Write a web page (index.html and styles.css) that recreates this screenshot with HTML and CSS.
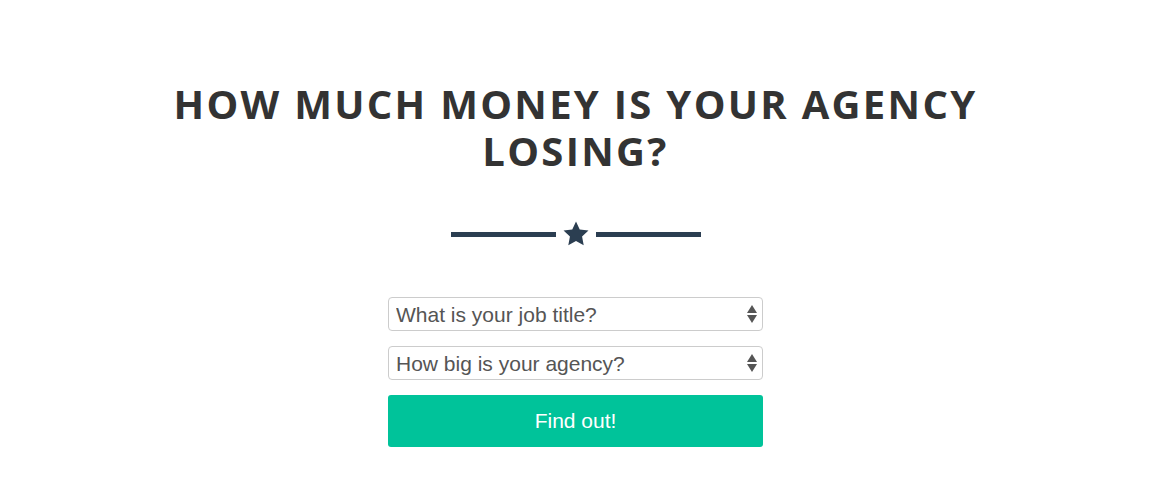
FILE: index.html
```html
<!DOCTYPE html>
<html lang="en">
<head>
    <meta charset="UTF-8">
    <title>How much money is your agency losing?</title>
    <link rel="stylesheet" href="styles.css">
</head>
<body>

<div class="section">
    <h1 class="title">How much money is your agency losing?</h1>

    <div class="divider">
        <span class="divider-line"></span>
        <svg class="divider-star" viewBox="0 0 24 24" width="28" height="28">
            <path d="M12 1.2l3.2 6.9 7.5.9-5.5 5.2 1.4 7.5L12 18l-6.6 3.7 1.4-7.5L1.3 9l7.5-.9z" fill="#2b3e51"/>
        </svg>
        <span class="divider-line"></span>
    </div>

    <form class="calc-form">
        <div class="select-wrap">
            <select class="field">
                <option>What is your job title?</option>
            </select>
            <svg class="select-arrows" viewBox="0 0 10 18" width="10" height="18">
                <path d="M5 0l5 8H0z M0 10h10l-5 8z" fill="#555"/>
            </svg>
        </div>
        <div class="select-wrap">
            <select class="field">
                <option>How big is your agency?</option>
            </select>
            <svg class="select-arrows" viewBox="0 0 10 18" width="10" height="18">
                <path d="M5 0l5 8H0z M0 10h10l-5 8z" fill="#555"/>
            </svg>
        </div>
        <button type="submit" class="btn-submit">Find out!</button>
    </form>
</div>

</body>
</html>
```

FILE: styles.css
```css
body { margin: 0; background: #fff; font-family: "Liberation Sans", Arial, sans-serif; }
.section { display: flex; flex-direction: column; align-items: center; padding: 80px 20px 0 0; }
.title { margin: 0; width: 860px; text-align: center; text-transform: uppercase; font-family: "Open Sans", sans-serif; font-weight: 700; font-size: 40px; line-height: 47px; letter-spacing: 2.3px; color: #333; }
.divider { display: flex; align-items: center; gap: 6px; margin-top: 46px; }
.divider-line { display: block; width: 105px; height: 5px; background: #2b3e51; }
.divider-star { display: block; }
.calc-form { display: flex; flex-direction: column; gap: 15px; width: 375px; margin-top: 49px; }
.select-wrap { position: relative; }
.field { display: block; width: 100%; height: 34px; padding: 0 30px 0 7px; border: 1px solid #ccc; border-radius: 4px; background: #fff; font-family: "Liberation Sans", Arial, sans-serif; font-size: 21px; color: #555; appearance: none; -webkit-appearance: none; box-sizing: border-box; }
.select-arrows { position: absolute; right: 6px; top: 8px; pointer-events: none; }
.btn-submit { height: 52px; border: none; border-radius: 3px; background: #00c39a; color: #fff; font-family: "Liberation Sans", Arial, sans-serif; font-size: 21px; cursor: pointer; }
```
